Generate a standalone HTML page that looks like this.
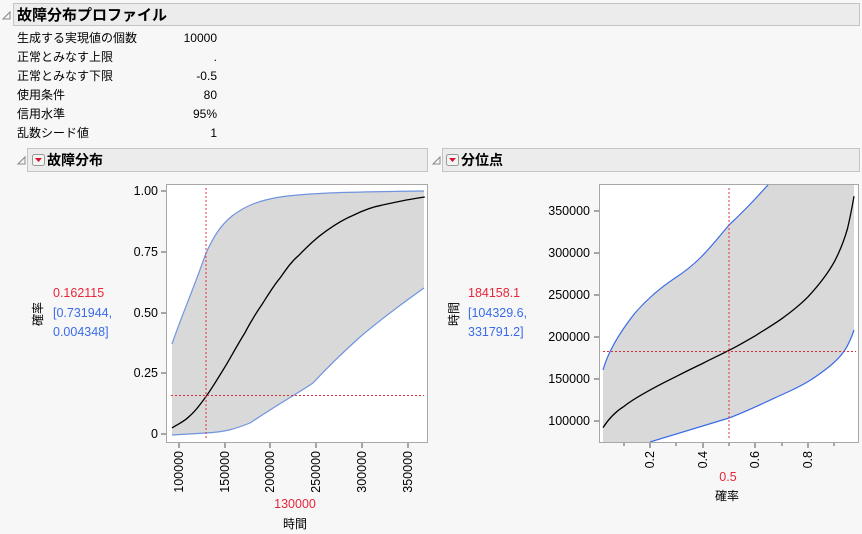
<!DOCTYPE html>
<html><head><meta charset="utf-8"><style>
html,body{margin:0;padding:0;background:#f7f7f7;}
svg{display:block;font-family:"Liberation Sans","Noto Sans CJK JP",sans-serif;}
</style></head><body>
<svg width="862" height="534" viewBox="0 0 862 534" xmlns="http://www.w3.org/2000/svg">
<rect width="862" height="534" fill="#f7f7f7"/>
<path d="M3 19 L10 12 L10 19 Z" fill="none" stroke="#888" stroke-width="1"/>
<rect x="13.5" y="3.5" width="846" height="22" fill="#ececec" stroke="#c4c4c4"/>
<text x="17" y="20" font-size="15" font-weight="bold" fill="#000">故障分布プロファイル</text>
<g font-size="12" fill="#000">
<text x="17" y="42">生成する実現値の個数</text><text x="217" y="42" text-anchor="end">10000</text>
<text x="17" y="61">正常とみなす上限</text><text x="217" y="61" text-anchor="end">.</text>
<text x="17" y="80">正常とみなす下限</text><text x="217" y="80" text-anchor="end">-0.5</text>
<text x="17" y="99">使用条件</text><text x="217" y="99" text-anchor="end">80</text>
<text x="17" y="118">信用水準</text><text x="217" y="118" text-anchor="end">95%</text>
<text x="17" y="137">乱数シード値</text><text x="217" y="137" text-anchor="end">1</text>
</g>
<path d="M18 164 L25 157 L25 164 Z" fill="none" stroke="#888"/>
<rect x="27.5" y="148.5" width="400" height="23" fill="#ececec" stroke="#c4c4c4"/>
<rect x="32.5" y="154.5" width="12" height="11" rx="2" fill="#f4f4f4" stroke="#999"/>
<path d="M35 158 L42 158 L38.5 162 Z" fill="#d8102a"/>
<text x="47" y="165" font-size="14" font-weight="bold">故障分布</text>
<path d="M433 164 L440 157 L440 164 Z" fill="none" stroke="#888"/>
<rect x="442.5" y="148.5" width="417" height="23" fill="#ececec" stroke="#c4c4c4"/>
<rect x="446.5" y="154.5" width="12" height="11" rx="2" fill="#f4f4f4" stroke="#999"/>
<path d="M449 158 L456 158 L452.5 162 Z" fill="#d8102a"/>
<text x="461" y="165" font-size="14" font-weight="bold">分位点</text>

<defs>
<clipPath id="cl"><rect x="167" y="185" width="260" height="257"/></clipPath>
<clipPath id="cr"><rect x="600" y="185" width="258" height="257"/></clipPath>
</defs>
<!-- LEFT -->
<rect x="166.5" y="184.5" width="261" height="258" fill="#fff" stroke="#a8a8a8"/>
<g clip-path="url(#cl)">
<path d="M172 344 C180 320 195 285 206 253 C214 236 220 226 232 216 C244 207 256 201 280 197 C310 193 340 192 424 191 L424 288 C400 305 380 320 360 337 C340 355 325 370 313 383 C295 395 280 403 250 423 C235 429 225 432 206 433 L172 435 Z" fill="#d9d9d9"/>
<path d="M172 344 C180 320 195 285 206 253 C214 236 220 226 232 216 C244 207 256 201 280 197 C310 193 340 192 424 191" fill="none" stroke="#6f94e0" stroke-width="1.2"/>
<path d="M172 435 L206 433 C225 432 235 429 250 423 C280 403 295 395 313 383 C325 370 340 355 360 337 C380 320 400 305 424 288" fill="none" stroke="#6f94e0" stroke-width="1.2"/>
<path d="M172 427.9 C180 423 185 421 189.1 416.5 C196 411 202 402 207.4 394.6 C214 385 220 375 225.7 365.7 C232 355 238 344 244 334.4 C250 323 256 313 262.3 304 C268 295 274 285 280.6 277.3 C287 268 292 261 298.9 255.2 C308 246 316 238 326.4 230.8 C336 224 344 219 353.9 215 C364 210 372 207 381.3 205.3 C396 202 410 199 424.8 197" fill="none" stroke="#000" stroke-width="1.3"/>
<line x1="206" y1="188" x2="206" y2="440" stroke="#e0303a" stroke-dasharray="2,2"/>
<rect x="171" y="395" width="253" height="1" fill="none"/>
<line x1="171" y1="395.5" x2="424" y2="395.5" stroke="#e0303a" stroke-width="1.1" stroke-dasharray="2,2"/>
</g>
<g stroke="#555">
<line x1="161" y1="191" x2="166" y2="191"/><line x1="161" y1="252" x2="166" y2="252"/>
<line x1="161" y1="313" x2="166" y2="313"/><line x1="161" y1="373" x2="166" y2="373"/><line x1="161" y1="434" x2="166" y2="434"/>
<line x1="179" y1="443" x2="179" y2="448"/><line x1="225" y1="443" x2="225" y2="448"/><line x1="270" y1="443" x2="270" y2="448"/>
<line x1="316" y1="443" x2="316" y2="448"/><line x1="362" y1="443" x2="362" y2="448"/><line x1="408" y1="443" x2="408" y2="448"/>
</g>
<g font-size="12.5" fill="#000" text-anchor="end">
<text x="158" y="195">1.00</text><text x="158" y="256">0.75</text><text x="158" y="317">0.50</text>
<text x="158" y="377">0.25</text><text x="158" y="438">0</text>
</g>
<g font-size="12.5" fill="#000" text-anchor="end">
<text transform="translate(183,451) rotate(-90)">100000</text>
<text transform="translate(229,451) rotate(-90)">150000</text>
<text transform="translate(274,451) rotate(-90)">200000</text>
<text transform="translate(320,451) rotate(-90)">250000</text>
<text transform="translate(366,451) rotate(-90)">300000</text>
<text transform="translate(412,451) rotate(-90)">350000</text>
</g>
<text x="295" y="508" font-size="12.5" fill="#e8263a" text-anchor="middle">130000</text>
<text x="295" y="528" font-size="12" fill="#000" text-anchor="middle">時間</text>
<text transform="translate(42,314) rotate(-90)" font-size="12" text-anchor="middle">確率</text>
<text x="53" y="297" font-size="12.5" fill="#e8263a">0.162115</text>
<text x="53" y="317" font-size="12.5" fill="#3a6be8">[0.731944,</text>
<text x="53" y="336" font-size="12.5" fill="#3a6be8">0.004348]</text>

<!-- RIGHT -->
<rect x="599.5" y="184.5" width="259" height="258" fill="#fff" stroke="#a8a8a8"/>
<g clip-path="url(#cr)">
<path d="M603 370 C608 352 620 332 635 313 C648 298 660 288 675 278 C700 262 712 245 729 225 C745 210 755 200 790 160 L854 160 L854 330 C848 348 842 356 830 366 C815 378 805 384 790 391 C770 400 750 410 729 418 L650 442 L603 450 Z" fill="#d9d9d9"/>
<path d="M603 370 C608 352 620 332 635 313 C648 298 660 288 675 278 C700 262 712 245 729 225 C745 210 755 200 790 160" fill="none" stroke="#3a6be8" stroke-width="1.2"/>
<path d="M650 442 L729 418 C750 410 770 400 790 391 C805 384 815 378 830 366 C842 356 848 348 854 330" fill="none" stroke="#3a6be8" stroke-width="1.2"/>
<path d="M603 427.6 C608 420 615 412 623.7 406.6 C632 400 641 395 650 390.1 C659 385 667 381 676.3 376.4 C685 372 693 368 702.6 363.5 C711 359 720 355 729 350.3 C738 346 746 341 755.3 335.8 C764 330 773 325 781.6 318.8 C791 312 800 305 808 296.8 C818 286 827 275 834.3 261.8 C840 251 844 241 847.5 228.6 C850 218 852 208 854 196.2" fill="none" stroke="#000" stroke-width="1.3"/>
<line x1="729" y1="188" x2="729" y2="440" stroke="#e0303a" stroke-dasharray="2,2"/>
<line x1="603" y1="351.5" x2="856" y2="351.5" stroke="#e0303a" stroke-width="1.1" stroke-dasharray="2,2"/>
</g>
<g stroke="#555">
<line x1="594" y1="211" x2="599" y2="211"/><line x1="594" y1="253" x2="599" y2="253"/><line x1="594" y1="295" x2="599" y2="295"/>
<line x1="594" y1="337" x2="599" y2="337"/><line x1="594" y1="379" x2="599" y2="379"/><line x1="594" y1="421" x2="599" y2="421"/>
<line x1="624" y1="443" x2="624" y2="446"/><line x1="650" y1="443" x2="650" y2="448"/><line x1="676" y1="443" x2="676" y2="446"/>
<line x1="703" y1="443" x2="703" y2="448"/><line x1="729" y1="443" x2="729" y2="446"/><line x1="755" y1="443" x2="755" y2="448"/>
<line x1="782" y1="443" x2="782" y2="446"/><line x1="808" y1="443" x2="808" y2="448"/><line x1="834" y1="443" x2="834" y2="446"/>
</g>
<g font-size="12.5" fill="#000" text-anchor="end">
<text x="590" y="215">350000</text><text x="590" y="257">300000</text><text x="590" y="299">250000</text>
<text x="590" y="341">200000</text><text x="590" y="383">150000</text><text x="590" y="425">100000</text>
</g>
<g font-size="12.5" fill="#000" text-anchor="end">
<text transform="translate(654,451) rotate(-90)">0.2</text>
<text transform="translate(707,451) rotate(-90)">0.4</text>
<text transform="translate(759,451) rotate(-90)">0.6</text>
<text transform="translate(812,451) rotate(-90)">0.8</text>
</g>
<text x="728" y="481" font-size="12.5" fill="#e8263a" text-anchor="middle">0.5</text>
<text x="727" y="500" font-size="12" fill="#000" text-anchor="middle">確率</text>
<text transform="translate(458,314) rotate(-90)" font-size="12" text-anchor="middle">時間</text>
<text x="468" y="297" font-size="12.5" fill="#e8263a">184158.1</text>
<text x="468" y="317" font-size="12.5" fill="#3a6be8">[104329.6,</text>
<text x="468" y="336" font-size="12.5" fill="#3a6be8">331791.2]</text>
</svg>
</body></html>
